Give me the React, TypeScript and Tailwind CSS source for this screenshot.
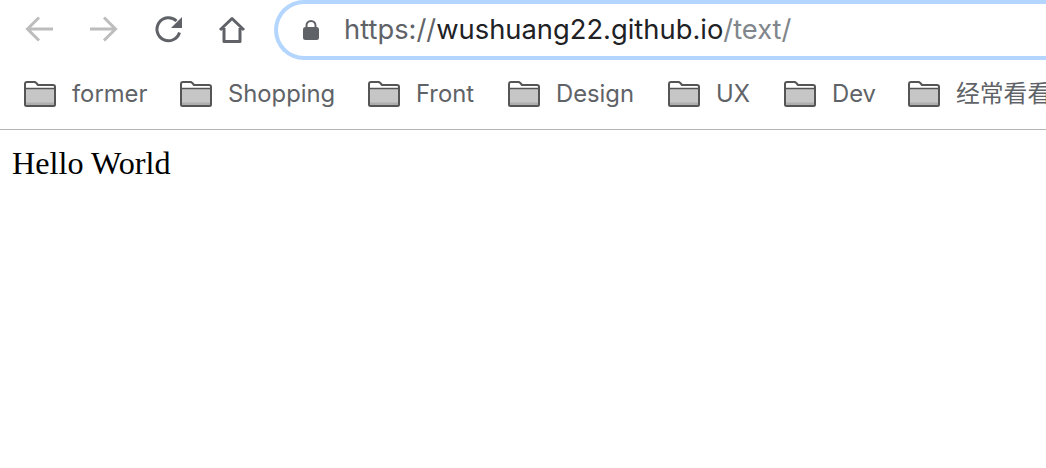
const bookmarks = ["former", "Shopping", "Front", "Design", "UX", "Dev", "经常看看"];

function Folder() {
  return (
    <svg width="32" height="26" viewBox="0 0 32 26" className="shrink-0">
      <path d="M1 24V3q0-2 2-2h7.5q1 0 1.800 1l1.700 2H29q2 0 2 2v17.500q0 1.500-1.500 1.500h-27Q1 25 1 24z" fill="#fff" />
      <path d="M1.500 8H30.500V24.500H1.500z" fill="#c6c6c6" />
      <path d="M1.500 21.500H30.500V24.500H1.500z" fill="#aeaeae" />
      <path d="M1 7.500H31" stroke="#555" strokeWidth="1.500" fill="none" />
      <path d="M1 24V3q0-2 2-2h7.500q1 0 1.800 1l1.700 2H29q2 0 2 2v17.500q0 1.500-1.500 1.500h-27Q1 25 1 24z" fill="none" stroke="#555" strokeWidth="2" strokeLinejoin="round" />
    </svg>
  );
}

export default function App() {
  return (
    <div className="h-[468px] w-[1046px] overflow-hidden bg-white font-['Inter','Noto_Sans_CJK_SC',sans-serif]">
      <div className="flex h-[60px] items-center pl-[25px]">
        <svg width="30" height="28" viewBox="0 0 30 28" fill="none" stroke="#bdbdbd" strokeWidth="3" className="mr-[33px] shrink-0">
          <path d="M28 13H3M14 1.500 2.500 13 14 24.500" />
        </svg>
        <svg width="30" height="28" viewBox="0 0 30 28" fill="none" stroke="#bdbdbd" strokeWidth="3" className="mr-[36px] shrink-0">
          <path d="M2 13H27M16 1.500 27.500 13 16 24.500" />
        </svg>
        <svg width="30" height="30" viewBox="0 0 30 30" fill="none" className="mr-[34px] shrink-0">
          <path d="M25.500 17.500A11.500 11.500 0 1 1 22.500 6" stroke="#5f6368" strokeWidth="3" />
          <path d="M28 2V13H17z" fill="#5f6368" />
        </svg>
        <svg width="28" height="28" viewBox="0 0 28 28" fill="none" stroke="#5f6368" strokeWidth="3" className="mr-[28px] shrink-0">
          <path d="M2 14 14 2.500 26 14M6 12V25.500H22V12" strokeLinejoin="round" />
        </svg>
        <div className="flex h-[60px] w-[820px] shrink-0 items-center rounded-l-[30px] border-4 border-r-0 border-[#b3d5fe] pl-[24px]">
          <svg width="18" height="22" viewBox="0 0 18 22" className="mr-[24px] shrink-0">
            <path d="M4.500 9V6.500a4.500 4.500 0 0 1 9 0V9" fill="none" stroke="#5f6368" strokeWidth="2" />
            <rect x="1" y="8" width="16" height="13" rx="2.500" fill="#5f6368" />
          </svg>
          <span className="whitespace-nowrap text-[27.35px] text-[#5f6368]">
            https://<span className="text-[#202124]">wushuang22.github.io</span>
            <span className="text-[#80868b]">/text/</span>
          </span>
        </div>
      </div>
      <div className="grid h-[70px] grid-cols-[156px_188px_140px_160px_116px_124px_200px] items-center border-b border-[#b5b5b5] pb-[2px] pl-[24px]">
        {bookmarks.map((name) => (
          <div key={name} className="flex items-center gap-[16px]">
            <Folder />
            <span className="whitespace-nowrap text-[23.8px] text-[#5f6368]">{name}</span>
          </div>
        ))}
      </div>
      <p className="pl-[12px] pt-[15px] font-['Liberation_Serif',serif] text-[32.2px] leading-[36px] text-black">Hello World</p>
    </div>
  );
}
